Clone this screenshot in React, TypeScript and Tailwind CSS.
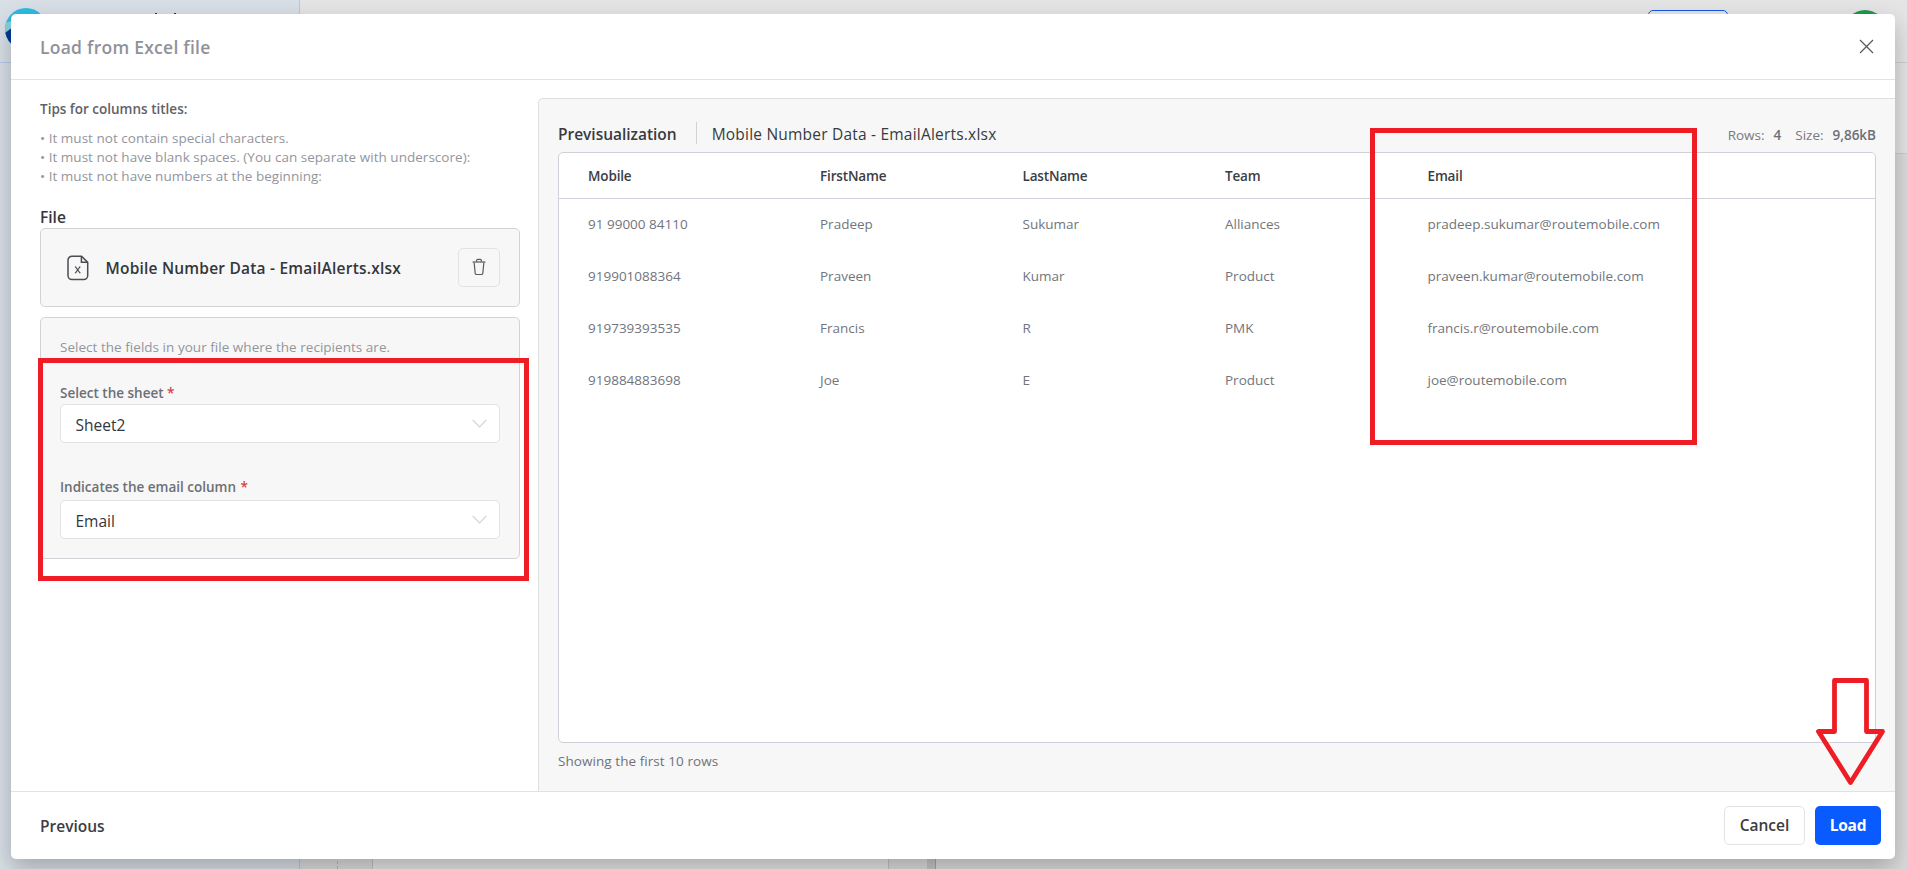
import type { ReactNode } from "react";

const columns = ["Mobile", "FirstName", "LastName", "Team", "Email"];

const rows = [
  ["91 99000 84110", "Pradeep", "Sukumar", "Alliances", "pradeep.sukumar@routemobile.com"],
  ["919901088364", "Praveen", "Kumar", "Product", "praveen.kumar@routemobile.com"],
  ["919739393535", "Francis", "R", "PMK", "francis.r@routemobile.com"],
  ["919884883698", "Joe", "E", "Product", "joe@routemobile.com"],
];

function Backdrop() {
  return (
    <div className="flex h-full bg-[#e5e5e5]">
      <div className="h-full w-[300px] border-r border-[#b4c8e8] bg-[#d8dfe6]">
        <div className="flex h-[63px] border-b border-[#b4c8e8] pl-[5px] pt-2">
          <svg width="42" height="42" viewBox="0 0 42 42">
            <clipPath id="logo">
              <circle cx="21" cy="21" r="21" />
            </clipPath>
            <g clipPath="url(#logo)">
              <rect width="42" height="42" fill="#2bbde3" />
              <path d="M0 15 L16 10 V42 H0Z" fill="#8bd0dd" />
              <path d="M0 25 L8 19 L42 22 V42 H0Z" fill="#003a93" />
            </g>
          </svg>
          <div className="ml-[108px] mt-[5px] h-3 w-[2px] bg-[#1c3564]" />
          <div className="ml-[17px] mt-[5px] h-3 w-[2px] bg-[#1c3564]" />
        </div>
      </div>
      <div className="flex h-full flex-1 flex-col">
        <div className="flex h-[63px] justify-end border-b border-[#cfcfcf] pr-[22px] pt-[10px]">
          <div className="mr-[117px] h-9 w-20 rounded-[5px] border border-[#1557e0]" />
          <div className="h-10 w-10 rounded-full bg-[#1f9a4d]" />
        </div>
        <div className="h-[91px] border-b border-[#cccccc] bg-[#e5e5e5]" />
        <div className="flex flex-1 bg-[#dcdcdc]">
          <div className="w-[38px] border-r border-dashed border-[#b9b9b9]" />
          <div className="w-[34px]" />
          <div className="w-[517px] border-x border-[#c2c2c2] bg-[#e5e5e5]" />
          <div className="w-[38px]" />
          <div className="w-[9px] border-r border-[#a6a6a6] bg-[#c6c6c6]" />
        </div>
      </div>
    </div>
  );
}

function FileIcon() {
  return (
    <svg width="22" height="26" viewBox="0 0 22 26" fill="none" stroke="#4b4d52" strokeWidth="1.5">
      <path d="M14.6 1.2H5A4 4 0 0 0 1 5.2V20.6A4 4 0 0 0 5 24.6H16.7A4 4 0 0 0 20.7 20.6V7.4Z" strokeLinejoin="round" />
      <path d="M14.4 1.4V7.2H20.6" />
      <path d="M8.5 11.8L12.9 17.8M12.9 11.8L8.5 17.8" strokeWidth="1.1" />
      <path d="M7.8 17.8H9.4M12.2 17.8H13.8M7.8 11.8H9.2M12.2 11.8H13.6" strokeWidth="0.7" />
    </svg>
  );
}

function TrashIcon() {
  return (
    <svg width="14" height="18" viewBox="0 0 14 18" fill="none" stroke="#595b61" strokeWidth="1.2">
      <path d="M0.6 4H13.4" />
      <path d="M4.6 3.8V2.6A1.2 1.2 0 0 1 5.8 1.4H8.2A1.2 1.2 0 0 1 9.4 2.6V3.8" />
      <path d="M2.1 4.2L3.2 15.3A1.4 1.4 0 0 0 4.6 16.5H9.4A1.4 1.4 0 0 0 10.8 15.3L11.9 4.2" />
    </svg>
  );
}

function Select({ children }: { children: ReactNode }) {
  return (
    <div className="flex h-[39px] items-center justify-between rounded-[5px] border border-[#e2e3e5] bg-white pl-[14.5px] pr-3">
      <span className="pt-[2px] text-[15.5px] text-[#33363c]">{children}</span>
      <svg width="15" height="9" viewBox="0 0 15 9" fill="none" stroke="#d3d5d9" strokeWidth="1.2">
        <path d="M0.8 1L7.5 7.8L14.2 1" />
      </svg>
    </div>
  );
}

function SidePanel() {
  return (
    <div className="w-[480px] shrink-0 pt-[19px] text-[13.5px]">
      <div className="h-5 leading-5 font-semibold text-[#5f6168]">Tips for columns titles:</div>
      <div className="mt-[9.5px] leading-[19.2px] tracking-[0.03px] text-[#93959d]">
        <div>• It must not contain special characters.</div>
        <div>• It must not have blank spaces. (You can separate with underscore):</div>
        <div>• It must not have numbers at the beginning:</div>
      </div>
      <div className="mt-[19.9px] h-[22px] text-[15.5px] leading-[22px] font-semibold text-[#33363c]">File</div>
      <div className="flex h-[79px] items-center rounded-[5px] border border-[#d2d3d8] bg-[#f7f7f7] pl-[26px] pr-[19px]">
        <FileIcon />
        <span className="ml-[16.5px] flex-1 pt-[3px] text-[15.5px] font-semibold tracking-[0.21px] text-[#33363c]">
          Mobile Number Data - EmailAlerts.xlsx
        </span>
        <div className="mb-px flex h-[39px] w-[42px] items-center justify-center rounded-[5px] border border-[#e2e3e5]">
          <TrashIcon />
        </div>
      </div>
      <div className="mt-[10px] h-[242px] rounded-[5px] border border-[#d2d3d8] bg-[#f7f7f7] px-[19px] pt-[19px] leading-5">
        <div className="tracking-[0.03px] text-[#93959d]">Select the fields in your file where the recipients are.</div>
        <div className="mt-[26px] mb-px font-semibold text-[#6c6f76]">
          Select the sheet <span className="text-[#d6404a]">*</span>
        </div>
        <Select>Sheet2</Select>
        <div className="mt-[34px] mb-[3px] font-semibold text-[#6c6f76]">
          Indicates the email column <span className="ml-px text-[#d6404a]">*</span>
        </div>
        <Select>Email</Select>
      </div>
    </div>
  );
}

function Preview() {
  return (
    <div className="mt-[18px] ml-[18px] flex-1 rounded-tl-[5px] border-t border-l border-[#dfe0e2] bg-[#f7f7f7] pt-[23px] pr-[19px] pl-[19px] text-[13.5px]">
      <div className="flex h-[22px] items-center text-[#383b41]">
        <span className="pt-[3px] text-[15.5px] font-semibold tracking-[-0.02px]">Previsualization</span>
        <div className="mr-[15px] ml-[19px] h-[22px] w-px bg-[#d2d3d8]" />
        <span className="flex-1 pt-[3px] text-[15.5px] tracking-[0.21px]">Mobile Number Data - EmailAlerts.xlsx</span>
        <span className="pt-1 text-[#777a82]">Rows:</span>
        <span className="ml-[9px] pt-1 font-semibold text-[#6c6f76]">4</span>
        <span className="ml-[14px] pt-1 text-[#777a82]">Size:</span>
        <span className="ml-[9px] pt-1 font-semibold text-[#6c6f76]">9,86kB</span>
      </div>
      <div className="mt-2 h-[591px] overflow-hidden rounded-[5px] border border-[#d0d1d8] bg-white">
        <div className="grid h-[46px] grid-cols-[232px_202.5px_202.5px_202.5px_1fr] items-center border-b border-[#d0d1d8] pt-[2px] pl-[29px] font-semibold tracking-[-0.15px] text-[#3a3d43]">
          {columns.map((c) => (
            <span key={c}>{c}</span>
          ))}
        </div>
        {rows.map((r) => (
          <div
            key={r[0]}
            className="grid h-[52px] grid-cols-[232px_202.5px_202.5px_202.5px_1fr] items-center pb-[2px] pl-[29px] text-[#72757c]"
          >
            {r.map((v) => (
              <span key={v}>{v}</span>
            ))}
          </div>
        ))}
      </div>
      <div className="mt-[7.5px] leading-5 tracking-[0.06px] text-[#6f7279]">Showing the first 10 rows</div>
    </div>
  );
}

export default function App() {
  return (
    <div className="relative h-[869px] w-[1907px] overflow-hidden font-['Open_Sans','Noto_Sans',sans-serif]">
      <Backdrop />
      <div className="absolute inset-0 pt-[14px] pr-3 pb-[10px] pl-[11px]">
        <div className="flex h-full flex-col overflow-hidden rounded-[5px] bg-white shadow-[0_10px_24px_rgba(0,0,0,0.25)]">
          <div className="flex h-[66px] items-center justify-between border-b border-[#e1e2e4] pr-[21px] pl-[29px]">
            <span className="pt-[2px] text-[17.5px] font-semibold tracking-[0.26px] text-[#8f929a]">Load from Excel file</span>
            <svg width="15" height="15" viewBox="0 0 15 15" fill="none" stroke="#55575c" strokeWidth="1.2">
              <path d="M1 1L14 14M14 1L1 14" />
            </svg>
          </div>
          <div className="flex h-[711px] pl-[29px]">
            <SidePanel />
            <Preview />
          </div>
          <div className="flex flex-1 items-center border-t border-[#e1e2e4] pr-[14px] pl-[29px] text-[15.5px] font-semibold text-[#3a3d43]">
            <span className="flex-1 pt-[2px]">Previous</span>
            <div className="flex h-[39px] w-[81px] items-center justify-center rounded-[5px] border border-[#e2e3e5] pt-px">
              Cancel
            </div>
            <div className="ml-[10px] flex h-[39px] w-[66px] items-center justify-center rounded-[5px] bg-[#0a5bff] pt-px font-bold tracking-[-0.25px] text-white">
              Load
            </div>
          </div>
        </div>
      </div>
      <div className="absolute top-[358px] left-[38px] h-[223px] w-[491px] border-5 border-[#ee1c24]" />
      <div className="absolute top-[128px] left-[1370px] h-[317px] w-[327px] border-5 border-[#ee1c24]" />
      <svg
        className="absolute top-[676px] left-[1814px]"
        width="74"
        height="112"
        viewBox="0 0 74 112"
        fill="none"
        stroke="#ee1c24"
        strokeWidth="4.8"
        strokeLinejoin="round"
      >
        <path d="M20.5 4.5H52.5V55.5H68.5L36.5 106.5L4.5 55.5H20.5Z" />
      </svg>
    </div>
  );
}
